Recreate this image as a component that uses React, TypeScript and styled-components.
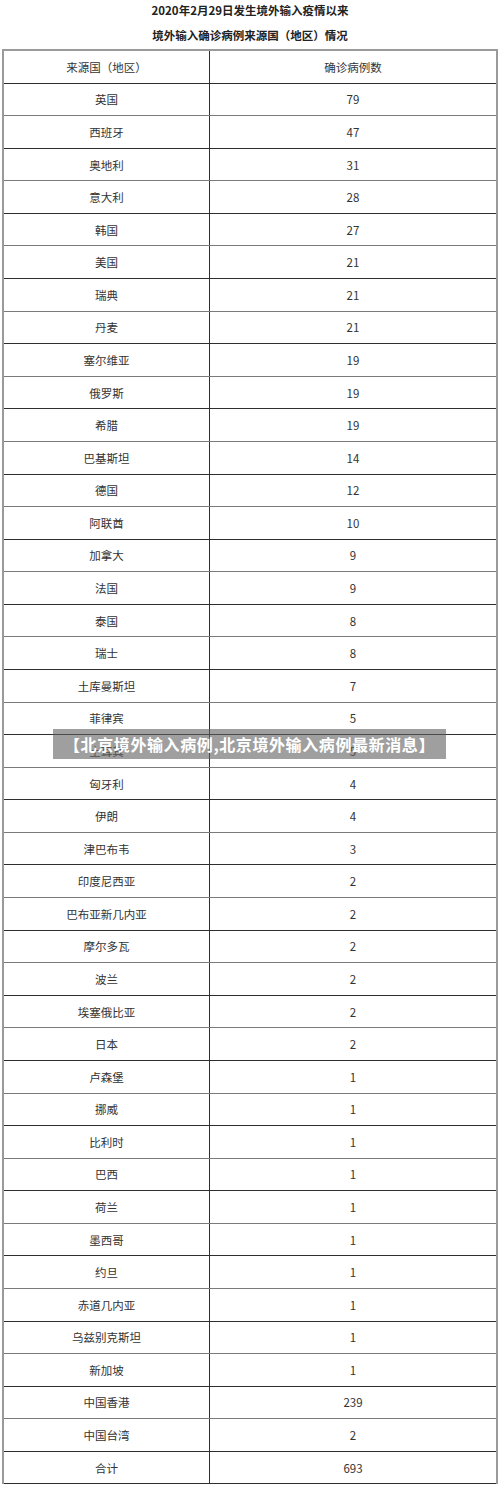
import React from "react";
import styled, { createGlobalStyle } from "styled-components";

const GlobalStyle = createGlobalStyle`
  html, body { margin: 0; padding: 0; background: #ffffff; }
  body {
    font-family: "Noto Sans CJK SC", "Noto Sans", "Liberation Sans", sans-serif;
    color: #333333;
  }
`;

const Page = styled.div`
  position: relative;
  width: 500px;
  height: 1488px;
  overflow: hidden;
  background: #ffffff;
`;

const Heading = styled.div`
  display: flex;
  flex-direction: column;
  align-items: center;
  gap: 5px;
  padding-top: 0;
  margin-bottom: 4px;
`;

const HeadLine = styled.div`
  height: 20px;
  line-height: 20px;
  font-size: 11.5px;
  font-weight: 700;
  color: #222222;
  white-space: nowrap;
`;

const Table = styled.div`
  margin: 0 2px;
  border-top: 2px solid #9a9a9a;
  border-left: 2px solid #9a9a9a;
  border-right: 2px solid #9a9a9a;
  display: flex;
  flex-direction: column;
`;

const Row = styled.div<{ $soft?: boolean }>`
  display: grid;
  grid-template-columns: 206px 1fr;
  height: 32.59px;
  box-sizing: border-box;
  border-bottom: 1px solid ${(p) => (p.$soft ? "#7a7a7a" : "#2e2e2e")};
`;

const Cell = styled.div<{ $first?: boolean }>`
  display: flex;
  align-items: center;
  justify-content: center;
  font-size: 11.5px;
  color: #333333;
  box-sizing: border-box;
  border-right: ${(p) => (p.$first ? "1px solid #2e2e2e" : "none")};
  white-space: nowrap;
`;

const Banner = styled.div`
  position: absolute;
  left: 53px;
  top: 729px;
  width: 393px;
  height: 30px;
  background: rgba(95, 95, 95, 0.6);
  color: #ffffff;
  font-size: 16px;
  font-weight: 700;
  display: flex;
  align-items: center;
  justify-content: center;
  white-space: nowrap;
  letter-spacing: 0.6px;
`;

const rows: [string, string][] = [
  ["英国", "79"],
  ["西班牙", "47"],
  ["奥地利", "31"],
  ["意大利", "28"],
  ["韩国", "27"],
  ["美国", "21"],
  ["瑞典", "21"],
  ["丹麦", "21"],
  ["塞尔维亚", "19"],
  ["俄罗斯", "19"],
  ["希腊", "19"],
  ["巴基斯坦", "14"],
  ["德国", "12"],
  ["阿联酋", "10"],
  ["加拿大", "9"],
  ["法国", "9"],
  ["泰国", "8"],
  ["瑞士", "8"],
  ["土库曼斯坦", "7"],
  ["菲律宾", "5"],
  ["土耳其", "5"],
  ["匈牙利", "4"],
  ["伊朗", "4"],
  ["津巴布韦", "3"],
  ["印度尼西亚", "2"],
  ["巴布亚新几内亚", "2"],
  ["摩尔多瓦", "2"],
  ["波兰", "2"],
  ["埃塞俄比亚", "2"],
  ["日本", "2"],
  ["卢森堡", "1"],
  ["挪威", "1"],
  ["比利时", "1"],
  ["巴西", "1"],
  ["荷兰", "1"],
  ["墨西哥", "1"],
  ["约旦", "1"],
  ["赤道几内亚", "1"],
  ["乌兹别克斯坦", "1"],
  ["新加坡", "1"],
  ["中国香港", "239"],
  ["中国台湾", "2"],
  ["合计", "693"],
];

export default function App() {
  return (
    <Page>
      <GlobalStyle />
      <Heading>
        <HeadLine>2020年2月29日发生境外输入疫情以来</HeadLine>
        <HeadLine>境外输入确诊病例来源国（地区）情况</HeadLine>
      </Heading>
      <Table>
        <Row>
          <Cell $first>来源国（地区）</Cell>
          <Cell>确诊病例数</Cell>
        </Row>
        {rows.map(([name, n], i) => (
          <Row key={name} $soft={i % 2 === 0 && i < rows.length - 1}>
            <Cell $first>{name}</Cell>
            <Cell>{n}</Cell>
          </Row>
        ))}
      </Table>
      <Banner>【北京境外输入病例,北京境外输入病例最新消息】</Banner>
    </Page>
  );
}
